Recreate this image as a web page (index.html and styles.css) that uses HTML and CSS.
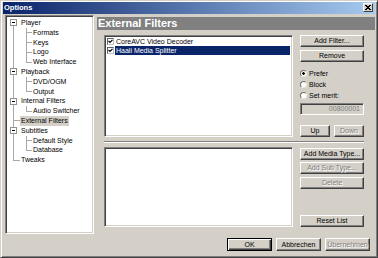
FILE: index.html
```html
<html>
  <head>
    <title>Options</title>
    <link rel="stylesheet" href="styles.css">
  </head>
  <body>
    <div class="window">
      <div class="titlebar">
        <span class="title">Options</span>
        <span class="close">
          <svg width="6" height="5" viewBox="0 0 6 5"><path d="M0 0L5 5M1 0L6 5M5 0L0 5M6 0L1 5" stroke="#000" stroke-width="1"/></svg>
        </span>
      </div>

      <div class="main">
        <div class="tree">
          <div class="node tr-down"><span class="slot sl-kids"><i class="box"></i></span><span class="label">Player</span></div>
          <div class="node tr-full"><span class="slot kid sl-mid"></span><span class="label">Formats</span></div>
          <div class="node tr-full"><span class="slot kid sl-mid"></span><span class="label">Keys</span></div>
          <div class="node tr-full"><span class="slot kid sl-mid"></span><span class="label">Logo</span></div>
          <div class="node tr-full"><span class="slot kid sl-end"></span><span class="label">Web Interface</span></div>
          <div class="node tr-full"><span class="slot sl-kids"><i class="box"></i></span><span class="label">Playback</span></div>
          <div class="node tr-full"><span class="slot kid sl-mid"></span><span class="label">DVD/OGM</span></div>
          <div class="node tr-full"><span class="slot kid sl-end"></span><span class="label">Output</span></div>
          <div class="node tr-full"><span class="slot sl-kids"><i class="box"></i></span><span class="label">Internal Filters</span></div>
          <div class="node tr-full"><span class="slot kid sl-end"></span><span class="label">Audio Switcher</span></div>
          <div class="node tr-full"><span class="slot sl-leaf"></span><span class="label selected">External Filters</span></div>
          <div class="node tr-full"><span class="slot sl-kids"><i class="box"></i></span><span class="label">Subtitles</span></div>
          <div class="node tr-full"><span class="slot kid sl-mid"></span><span class="label">Default Style</span></div>
          <div class="node tr-full"><span class="slot kid sl-end"></span><span class="label">Database</span></div>
          <div class="node tr-up"><span class="slot sl-leaf"></span><span class="label">Tweaks</span></div>
        </div>

        <div class="page">
          <div class="caption">External Filters</div>
          <div class="pane">
            <div class="row">
              <div class="list top">
                <div class="item"><i class="check"></i><span class="text">CoreAVC Video Decoder</span></div>
                <div class="item"><i class="check"></i><span class="text hilite">Haali Media Splitter</span></div>
              </div>
              <div class="side">
                <div class="btn">Add Filter...</div>
                <div class="btn gap3">Remove</div>
                <div class="radios">
                  <div class="radio"><i class="dot on"></i>Prefer</div>
                  <div class="radio"><i class="dot"></i>Block</div>
                  <div class="radio"><i class="dot"></i>Set merit:</div>
                </div>
                <div class="edit">00800001</div>
                <div class="pair">
                  <div class="btn">Up</div>
                  <div class="btn off">Down</div>
                </div>
              </div>
            </div>

            <div class="groove"></div>

            <div class="row">
              <div class="list bottom"></div>
              <div class="side">
                <div class="btn first">Add Media Type...</div>
                <div class="btn off gap2">Add Sub Type...</div>
                <div class="btn off gap3">Delete</div>
                <div class="btn push">Reset List</div>
              </div>
            </div>
          </div>
        </div>
      </div>

      <div class="footer">
        <div class="btn wide default">OK</div>
        <div class="btn wide">Abbrechen</div>
        <div class="btn wide off">Übernehmen</div>
      </div>
    </div>
  </body>
</html>
```

FILE: styles.css
```css
body {
    margin: 0;
    padding: 0;
    background: #d4d0c8;
    font-family: "Liberation Sans", Arial, sans-serif;
    font-size: 7px;
    color: #000;
}

.window {
    width: 378px;
    height: 258px;
    box-sizing: border-box;
    border: 1px solid;
    border-color: #d4d0c8 #404040 #404040 #d4d0c8;
    box-shadow: inset 1px 1px #fff, inset -1px -1px #808080;
    padding: 1px 2px 2px 2px;
    display: flex;
    flex-direction: column;
}

/* title bar */
.titlebar {
    height: 12px;
    background: linear-gradient(to right, #0a246a, #a6caf0);
    display: flex;
    align-items: flex-start;
    justify-content: space-between;
}
.title {
    color: #fff;
    font-weight: bold;
    font-size: 7.5px;
    line-height: 12px;
    padding-left: 1px;
}
.close {
    width: 10px;
    height: 9px;
    box-sizing: border-box;
    margin: 1px 2px 0 0;
    background: #d4d0c8;
    border: 1px solid;
    border-color: #fff #404040 #404040 #fff;
    display: flex;
    align-items: center;
    justify-content: center;
}

.main {
    display: flex;
    height: 220px;
}

/* tree on the left */
.tree {
    width: 89px;
    height: 219px;
    margin: 1px 0 0 2px;
    box-sizing: border-box;
    background: #fff;
    border: 1px solid;
    border-color: #808080 #fff #fff #808080;
    box-shadow: inset 1px 1px #404040, inset -1px -1px #d4d0c8;
    padding: 2px 0 0 1px;
}
.node {
    display: flex;
    height: 9.8px;
    line-height: 9.8px;
    background-repeat: no-repeat;
}
.tr-full { background-image: linear-gradient(#a8a8a8, #a8a8a8); background-position: 6px 0; background-size: 1px 100%; }
.tr-down { background-image: linear-gradient(#a8a8a8, #a8a8a8); background-position: 6px 100%; background-size: 1px 50%; }
.tr-up { background-image: linear-gradient(#a8a8a8, #a8a8a8); background-position: 6px 0; background-size: 1px 50%; }

.slot {
    width: 13px;
    height: 100%;
    flex: none;
    display: flex;
    align-items: center;
    background-repeat: no-repeat;
}
.slot.kid { width: 25px; }
.sl-kids {
    background-image: linear-gradient(#a8a8a8, #a8a8a8);
    background-position: 19px 100%;
    background-size: 1px 45%;
}
.sl-leaf {
    background-image: linear-gradient(#a8a8a8, #a8a8a8);
    background-position: 6px 50%;
    background-size: 7px 1px;
}
.sl-mid {
    background-image: linear-gradient(#a8a8a8, #a8a8a8), linear-gradient(#a8a8a8, #a8a8a8);
    background-position: 19px 0, 19px 50%;
    background-size: 1px 100%, 6px 1px;
}
.sl-end {
    background-image: linear-gradient(#a8a8a8, #a8a8a8), linear-gradient(#a8a8a8, #a8a8a8);
    background-position: 19px 0, 19px 50%;
    background-size: 1px 50%, 6px 1px;
}
.box {
    display: block;
    width: 7px;
    height: 7px;
    box-sizing: border-box;
    margin-left: 3px;
    border: 1px solid #909090;
    background: #fff linear-gradient(#000, #000) no-repeat 1px 2px / 3px 1px;
}
.label {
    padding: 0 1px;
    white-space: nowrap;
}
.label.selected {
    background: #d4d0c8;
}

/* right page */
.page {
    flex: 1;
    margin: 3px 0 0 3px;
}
.caption {
    height: 13px;
    line-height: 13px;
    background: #808080;
    color: #fff;
    font-size: 11px;
    font-weight: bold;
    padding-left: 1px;
}
.pane {
    padding: 5px 0 0 7px;
}
.row {
    display: flex;
    gap: 7px;
}
.list {
    width: 189px;
    box-sizing: border-box;
    background: #fff;
    border: 1px solid;
    border-color: #808080 #fff #fff #808080;
    box-shadow: inset 1px 1px #404040, inset -1px -1px #d4d0c8;
    padding: 1px 2px 0 2px;
}
.list.top { height: 102px; }
.list.bottom { height: 80px; }
.item {
    display: flex;
    align-items: center;
    height: 9px;
    line-height: 9px;
}
.check {
    width: 7px;
    height: 7px;
    box-sizing: border-box;
    flex: none;
    border: 1px solid;
    border-color: #606060 #c0c0c0 #c0c0c0 #606060;
    background: #fff url("data:image/svg+xml,%3Csvg xmlns='http://www.w3.org/2000/svg' width='5' height='5'%3E%3Cpath d='M0.5 2L2 3.5L4.5 0.8' stroke='%23000' stroke-width='1.2' fill='none'/%3E%3C/svg%3E") no-repeat center;
    margin-right: 1px;
}
.text {
    padding: 0 1px;
    flex: 1;
    white-space: nowrap;
}
.text.hilite {
    background: #0a246a;
    color: #fff;
}

.side {
    width: 64px;
    display: flex;
    flex-direction: column;
}
.btn {
    height: 12px;
    box-sizing: border-box;
    background: #d4d0c8;
    border: 1px solid;
    border-color: #fff #404040 #404040 #fff;
    box-shadow: inset -1px -1px #808080;
    text-align: center;
    line-height: 10px;
    white-space: nowrap;
}
.btn.off {
    color: #808080;
    text-shadow: 1px 1px #fff;
}
.gap3 { margin-top: 3px; }
.gap2 { margin-top: 2px; }
.first { margin-top: 1px; }
.push { margin-top: auto; }

.radios {
    margin-top: 6px;
}
.radio {
    display: flex;
    align-items: center;
    height: 11px;
    gap: 2px;
}
.dot {
    width: 7px;
    height: 7px;
    box-sizing: border-box;
    border-radius: 50%;
    border: 1px solid;
    border-color: #707070 #e8e8e8 #e8e8e8 #707070;
    background: #fff;
}
.dot.on {
    background: radial-gradient(circle, #000 0 1px, #fff 1.6px);
}
.edit {
    height: 12px;
    margin-top: 2px;
    box-sizing: border-box;
    border: 1px solid;
    border-color: #808080 #fff #fff #808080;
    box-shadow: inset 1px 1px #404040;
    color: #808080;
    text-align: right;
    line-height: 10px;
    padding-right: 3px;
}
.pair {
    display: flex;
    gap: 4px;
    margin-top: 10px;
}
.pair .btn {
    flex: 1;
}

.groove {
    width: 260px;
    height: 2px;
    box-sizing: border-box;
    margin: 4px 0;
    border-top: 1px solid #808080;
    border-bottom: 1px solid #fff;
}

/* bottom buttons */
.footer {
    display: flex;
    justify-content: flex-end;
    gap: 4px;
    margin-top: 4px;
    padding-right: 5px;
}
.btn.wide {
    width: 45px;
    height: 13px;
    line-height: 11px;
}
.btn.default {
    border: 1px solid #000;
    box-shadow: inset 1px 1px #fff, inset -1px -1px #404040, inset -2px -2px #808080;
}
```
